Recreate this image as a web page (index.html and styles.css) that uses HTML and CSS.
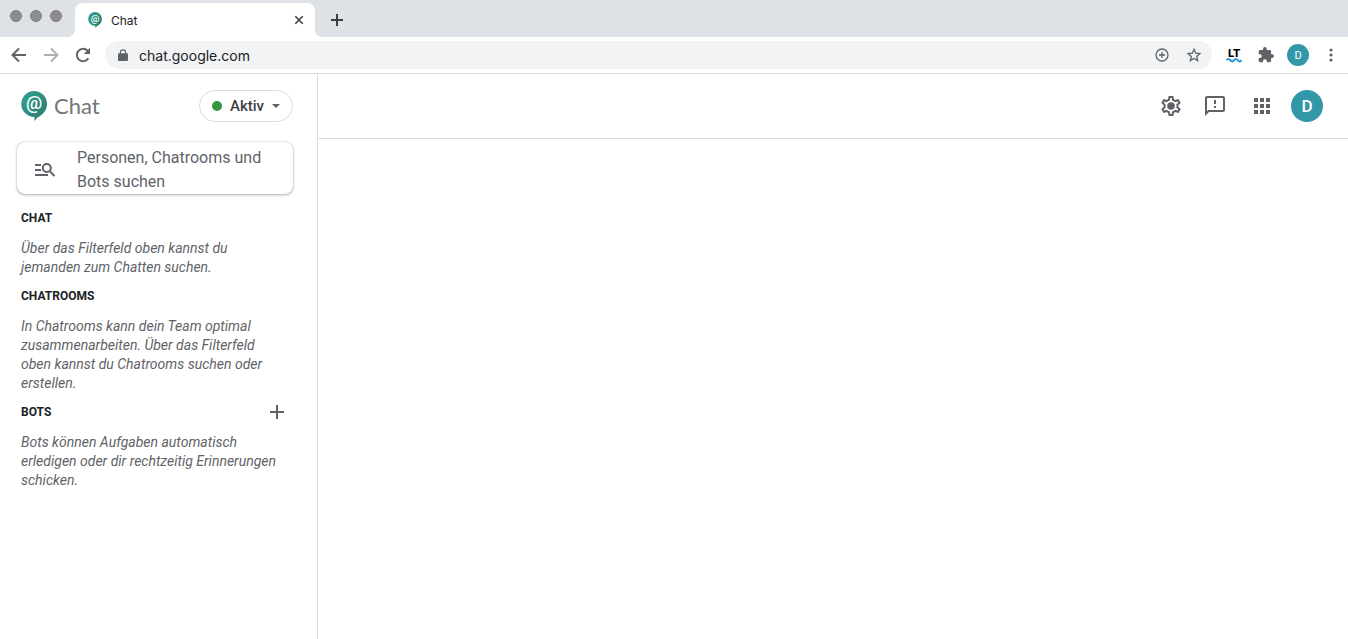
FILE: index.html
```html
<!DOCTYPE html>
<html lang="de">
<head>
<meta charset="utf-8">
<meta name="viewport" content="width=device-width, initial-scale=1">
<title>Chat</title>
<link rel="stylesheet" href="styles.css">
</head>
<body>
<svg class="defs" aria-hidden="true">
  <defs>
    <linearGradient id="teal" x1="0" y1="0" x2="1" y2="1">
      <stop offset="0" stop-color="#35a08e"/>
      <stop offset="1" stop-color="#287a70"/>
    </linearGradient>
    <symbol id="chat-logo" viewBox="0 0 26 30">
      <path fill="url(#teal)" d="M13 0a13 13 0 0 1 13 13c0 6.500-4.500 11-9.500 13.500L13.500 30v-4A13 13 0 1 1 13 0z"/>
      <text class="logo-at" x="13" y="18" text-anchor="middle">@</text>
    </symbol>
  </defs>
</svg>
<header class="browser">
  <div class="tabstrip">
    <div class="lights"><span class="light"></span><span class="light"></span><span class="light"></span></div>
    <div class="tab">
      <svg class="favicon" aria-hidden="true"><use href="#chat-logo"/></svg>
      <span class="tab-title">Chat</span>
      <button class="bare" aria-label="Tab schließen"><svg class="i10" viewBox="0 0 10 10"><path class="line dark" d="M1.300 1.300l7.400 7.400M8.700 1.300L1.300 8.700"/></svg></button>
    </div>
    <button class="bare new-tab" aria-label="Neuer Tab"><svg class="i14" viewBox="0 0 14 14"><path class="line dark" d="M7 1v12M1 7h12"/></svg></button>
  </div>
  <div class="toolbar">
    <nav class="nav-buttons">
      <button class="bare" aria-label="Zurück"><svg class="i16" viewBox="0 0 16 16"><path class="line" d="M15 8H2M8 1.500L1.500 8 8 14.500"/></svg></button>
      <button class="bare faded" aria-label="Vorwärts"><svg class="i16" viewBox="0 0 16 16"><path class="line" d="M1 8h13M8 1.500L14.500 8 8 14.500"/></svg></button>
      <button class="bare" aria-label="Neu laden"><svg class="i16" viewBox="0 0 16 16"><path class="line" d="M13.400 11.200A6.200 6.200 0 1 1 12.600 3.800l1 1"/><path d="M15 .8V7H8.800z"/></svg></button>
    </nav>
    <div class="omnibox">
      <svg class="lock" viewBox="0 0 10 12" aria-hidden="true"><path fill-rule="evenodd" d="M1.800 4.300V3.400a3.200 3.200 0 0 1 6.400 0v.9H9q1 0 1 1V11q0 1-1 1H1q-1 0-1-1V5.300q0-1 1-1zM3 4.300h4v-.9a2 2 0 0 0-4 0z"/></svg>
      <input class="url" type="text" value="chat.google.com" aria-label="Adresse">
      <button class="bare" aria-label="Installieren"><svg class="i14" viewBox="0 0 14 14"><circle class="line thin" cx="7" cy="7" r="6"/><path class="line thin" d="M7 4v6M4 7h6"/></svg></button>
      <button class="bare" aria-label="Lesezeichen"><svg class="i14" viewBox="0 0 14 14"><path class="line thin" d="M7 1.300l1.700 3.900 4.200.4-3.200 2.800 1 4.200L7 10.400l-3.700 2.200 1-4.200L1.100 5.600l4.200-.4z"/></svg></button>
    </div>
    <div class="extensions">
      <button class="bare" aria-label="LanguageTool"><svg class="i16" viewBox="0 0 16 16"><text class="lt" x="8" y="10" text-anchor="middle">LT</text><path class="wave" d="M.5 13.200q1.900-2.400 3.800 0t3.700 0 3.700 0 3.800 0"/></svg></button>
      <button class="bare" aria-label="Erweiterungen"><svg class="i16" viewBox="1 1 22 22"><path d="M20.500 11H19V7c0-1.100-.9-2-2-2h-4V3.500a2.500 2.500 0 0 0-5 0V5H4c-1.100 0-2 .9-2 2v3.800h1.500a2.700 2.700 0 0 1 0 5.400H2V20c0 1.100.9 2 2 2h3.800v-1.500a2.700 2.700 0 0 1 5.400 0V22H17c1.100 0 2-.9 2-2v-4h1.500a2.500 2.500 0 0 0 0-5z"/></svg></button>
      <button class="avatar small" aria-label="Profil">D</button>
      <button class="bare" aria-label="Menü"><svg class="i16" viewBox="0 0 16 16"><circle cx="8" cy="3" r="1.600"/><circle cx="8" cy="8" r="1.600"/><circle cx="8" cy="13" r="1.600"/></svg></button>
    </div>
  </div>
</header>
<div class="app">
  <aside class="sidebar">
    <div class="brand-row">
      <a class="brand" href="#"><svg class="logo" aria-hidden="true"><use href="#chat-logo"/></svg><span>Chat</span></a>
      <button class="status"><span class="dot"></span>Aktiv<svg class="caret" viewBox="0 0 8 4"><path d="M0 0h8L4 4z"/></svg></button>
    </div>
    <label class="search">
      <svg class="search-icon" viewBox="0 0 20 14" aria-hidden="true"><path class="line" d="M0 2h6M0 7h6M0 12h13M15 8.500l4.500 4.500"/><circle class="line" cx="11.800" cy="5" r="4"/></svg>
      <textarea class="search-field" rows="2" placeholder="Personen, Chatrooms und Bots suchen" aria-label="Personen, Chatrooms und Bots suchen"></textarea>
    </label>
    <section class="group">
      <h2>CHAT</h2>
      <p>Über das Filterfeld oben kannst du jemanden zum Chatten suchen.</p>
    </section>
    <section class="group">
      <h2>CHATROOMS</h2>
      <p>In Chatrooms kann dein Team optimal zusammenarbeiten. Über das Filterfeld oben kannst du Chatrooms suchen oder erstellen.</p>
    </section>
    <section class="group">
      <div class="group-head"><h2>BOTS</h2><button class="bare" aria-label="Bot hinzufügen"><svg class="i14" viewBox="0 0 14 14"><path class="line" d="M7 0v14M0 7h14"/></svg></button></div>
      <p>Bots können Aufgaben automatisch erledigen oder dir rechtzeitig Erinnerungen schicken.</p>
    </section>
  </aside>
  <main class="main">
    <div class="topbar">
      <button class="bare gear" aria-label="Einstellungen"><svg class="i24" viewBox="0 0 24 24"><path fill-rule="evenodd" d="M19.430 12.980c.04-.32.07-.64.07-.98 0-.34-.03-.66-.07-.98l2.110-1.650c.19-.15.24-.42.12-.64l-2-3.460c-.09-.16-.26-.25-.44-.25-.06 0-.12.01-.17.03l-2.490 1c-.52-.4-1.080-.73-1.690-.98l-.38-2.650C14.460 2.180 14.250 2 14 2h-4c-.25 0-.46.18-.49.42l-.38 2.650c-.61.25-1.170.59-1.690.98l-2.490-1c-.06-.02-.12-.03-.18-.03-.17 0-.34.09-.43.25l-2 3.460c-.13.22-.07.49.12.64l2.110 1.650c-.04.32-.07.65-.07.98 0 .33.03.66.07.98l-2.110 1.650c-.19.15-.24.42-.12.64l2 3.460c.09.16.26.25.44.25.06 0 .12-.01.17-.03l2.490-1c.52.4 1.080.73 1.690.98l.38 2.650c.03.24.24.42.49.42h4c.25 0 .46-.18.49-.42l.38-2.650c.61-.25 1.170-.59 1.690-.98l2.490 1c.06.02.12.03.18.03.17 0 .34-.09.43-.25l2-3.460c.12-.22.07-.49-.12-.64zm-1.980-1.710c.04.31.05.52.05.73 0 .21-.02.43-.05.73l-.14 1.130.89.7 1.080.84-.7 1.210-1.270-.51-1.040-.42-.9.68c-.43.32-.84.56-1.250.73l-1.060.43-.16 1.130-.2 1.350h-1.400l-.19-1.350-.16-1.130-1.060-.43c-.43-.18-.83-.41-1.230-.71l-.91-.7-1.060.43-1.270.51-.7-1.210 1.080-.84.89-.7-.14-1.130c-.03-.31-.05-.54-.05-.74s.02-.43.05-.73l.14-1.130-.89-.7-1.080-.84.7-1.210 1.270.51 1.040.42.9-.68c.43-.32.84-.56 1.250-.73l1.060-.43.16-1.130.2-1.350h1.390l.19 1.350.16 1.130 1.060.43c.43.18.83.41 1.230.71l.91.7 1.060-.43 1.270-.51.7 1.210-1.070.85-.89.7z"/><circle cx="12" cy="12" r="3.800"/></svg></button>
      <button class="bare feedback" aria-label="Feedback"><svg class="i24" viewBox="0 0 24 24"><path fill-rule="evenodd" d="M20 2H4c-1.100 0-1.990.9-1.990 2L2 22l4-4h14c1.100 0 2-.9 2-2V4c0-1.100-.9-2-2-2zm0 14H5.200L4 17.200V4h16z"/><path d="M11 6h2v4h-2zM11 12h2v2h-2z"/></svg></button>
      <button class="bare apps" aria-label="Google Apps"><svg class="i16" viewBox="0 0 16 16"><path d="M0 0h4v4H0zM6 0h4v4H6zM12 0h4v4h-4zM0 6h4v4H0zM6 6h4v4H6zM12 6h4v4h-4zM0 12h4v4H0zM6 12h4v4H6zM12 12h4v4h-4z"/></svg></button>
      <button class="avatar" aria-label="Google-Konto">D</button>
    </div>
  </main>
</div>
</body>
</html>
```

FILE: styles.css
```css
* { box-sizing: border-box; }
body {
  margin: 0;
  min-height: 100vh;
  display: flex;
  flex-direction: column;
  background: #fff;
  color: #202124;
  font-family: Roboto, "Liberation Sans", sans-serif;
  font-size: 14px;
}
svg { display: block; fill: #5f6368; flex: none; overflow: visible; }
.defs { position: absolute; width: 0; height: 0; }
button, input, textarea { font: inherit; color: inherit; margin: 0; padding: 0; border: 0; background: none; }
button { cursor: pointer; }
.bare { display: flex; align-items: center; justify-content: center; flex: none; }
.line { fill: none; stroke: #5f6368; stroke-width: 2; }
.line.thin { stroke-width: 1.3; }
.line.dark { stroke: #3c4043; }
.i10 { width: 10px; height: 10px; }
.i14 { width: 14px; height: 14px; }
.i16 { width: 16px; height: 16px; }
.i24 { width: 24px; height: 24px; }
.i10 .line { stroke-width: 1.6; }
.logo-at { fill: #fff; font: 500 18px Roboto, sans-serif; }

/* Browser frame */
.browser { border-bottom: 1px solid #dadce0; }
.tabstrip { display: flex; height: 37px; padding-left: 10px; background: #dee1e6; }
.lights { display: flex; gap: 8px; padding-top: 10px; width: 65px; }
.light { width: 12px; height: 12px; border-radius: 50%; background: #8e8e92; border: 1px solid #7d7d80; }
.tab {
  position: relative;
  display: flex;
  align-items: center;
  gap: 8px;
  width: 240px;
  margin-top: 3px;
  padding: 0 11px 0 13px;
  background: #fff;
  border-radius: 8px 8px 0 0;
  font-family: Inter, Roboto, sans-serif;
  font-size: 12px;
}
.tab::before, .tab::after {
  content: "";
  position: absolute;
  bottom: 0;
  width: 8px;
  height: 8px;
}
.tab::before { left: -8px; background: radial-gradient(circle at 0 0, #dee1e6 8px, #fff 8px); }
.tab::after { right: -8px; background: radial-gradient(circle at 100% 0, #dee1e6 8px, #fff 8px); }
.favicon { width: 14px; height: 16px; }
.tab-title { flex: 1; padding-left: 1px; }
.new-tab { margin: 3px 0 0 15px; }
.toolbar { display: flex; align-items: center; height: 36px; padding: 0 9px 0 11px; }
.nav-buttons { display: flex; gap: 16px; width: 94px; }
.faded { opacity: .5; }
.omnibox {
  flex: 1;
  display: flex;
  align-items: center;
  gap: 18px;
  height: 28px;
  padding: 0 11px 0 13px;
  border-radius: 14px;
  background: #f1f3f4;
}
.lock { width: 10px; height: 12px; }
.url { flex: 1; min-width: 0; margin-left: -7px; height: 28px; font-family: Inter, Roboto, sans-serif; }
.extensions { display: flex; align-items: center; gap: 16px; padding-left: 14px; }
.extensions > .small { margin: 0 -2px 0 -3px; }
.lt { font: 900 12px Lato, Roboto, sans-serif; fill: #000; }
.wave { fill: none; stroke: #2b95d6; stroke-width: 2; }
.avatar {
  width: 32px;
  height: 32px;
  flex: none;
  border-radius: 50%;
  background: #3298a8;
  color: #fff;
  font-size: 17px;
  font-weight: 500;
}
.avatar.small { width: 22px; height: 22px; font-size: 11px; font-weight: 400; }

/* Chat application */
.app { flex: 1; display: flex; }
.sidebar { flex: none; width: 318px; padding: 16px 24px 16px 16px; border-right: 1px solid #dadce0; }
.brand-row { display: flex; align-items: center; justify-content: space-between; padding-left: 5px; }
.brand { display: flex; align-items: center; gap: 7px; color: #757575; font-family: Lato, Roboto, sans-serif; font-size: 22px; line-height: 32px; text-decoration: none; }
.logo { width: 26px; height: 30px; }
.status {
  display: flex;
  align-items: center;
  gap: 8px;
  height: 32px;
  padding: 0 12px;
  border: 1px solid #dadce0;
  border-radius: 16px;
  color: #3c4043;
  font-size: 15px;
  font-weight: 500;
}
.dot { width: 10px; height: 10px; border-radius: 50%; background: #379440; }
.caret { width: 8px; height: 4px; }
.search {
  display: flex;
  align-items: center;
  gap: 22px;
  margin: 20px 0 0 1px;
  padding: 4px 18px 0;
  height: 52px;
  border-radius: 8px;
  box-shadow: 0 0 1px rgba(60, 64, 67, .4), 0 1px 3px rgba(60, 64, 67, .4);
}
.search-icon { width: 20px; height: 14px; }
.search-field { flex: 1; min-width: 0; height: 48px; line-height: 24px; font-size: 16px; resize: none; outline: 0; overflow: hidden; }
.search-field::placeholder { color: #5f6368; opacity: 1; }
.group { padding: 0 9px 0 5px; margin-top: 11px; }
.search + .group { margin-top: 16px; }
.group-head { display: flex; align-items: center; justify-content: space-between; }
h2 { margin: 0; font-size: 12px; line-height: 16px; font-weight: 700; }
p { margin: 13px 0 0; color: #5f6368; font-size: 14px; line-height: 19px; font-style: italic; }
.main { flex: 1; min-width: 0; }
.topbar {
  display: flex;
  align-items: center;
  justify-content: flex-end;
  gap: 20px;
  height: 65px;
  padding-right: 25px;
  border-bottom: 1px solid #dadce0;
}
.apps { margin: 0 1px 0 7px; }
```
